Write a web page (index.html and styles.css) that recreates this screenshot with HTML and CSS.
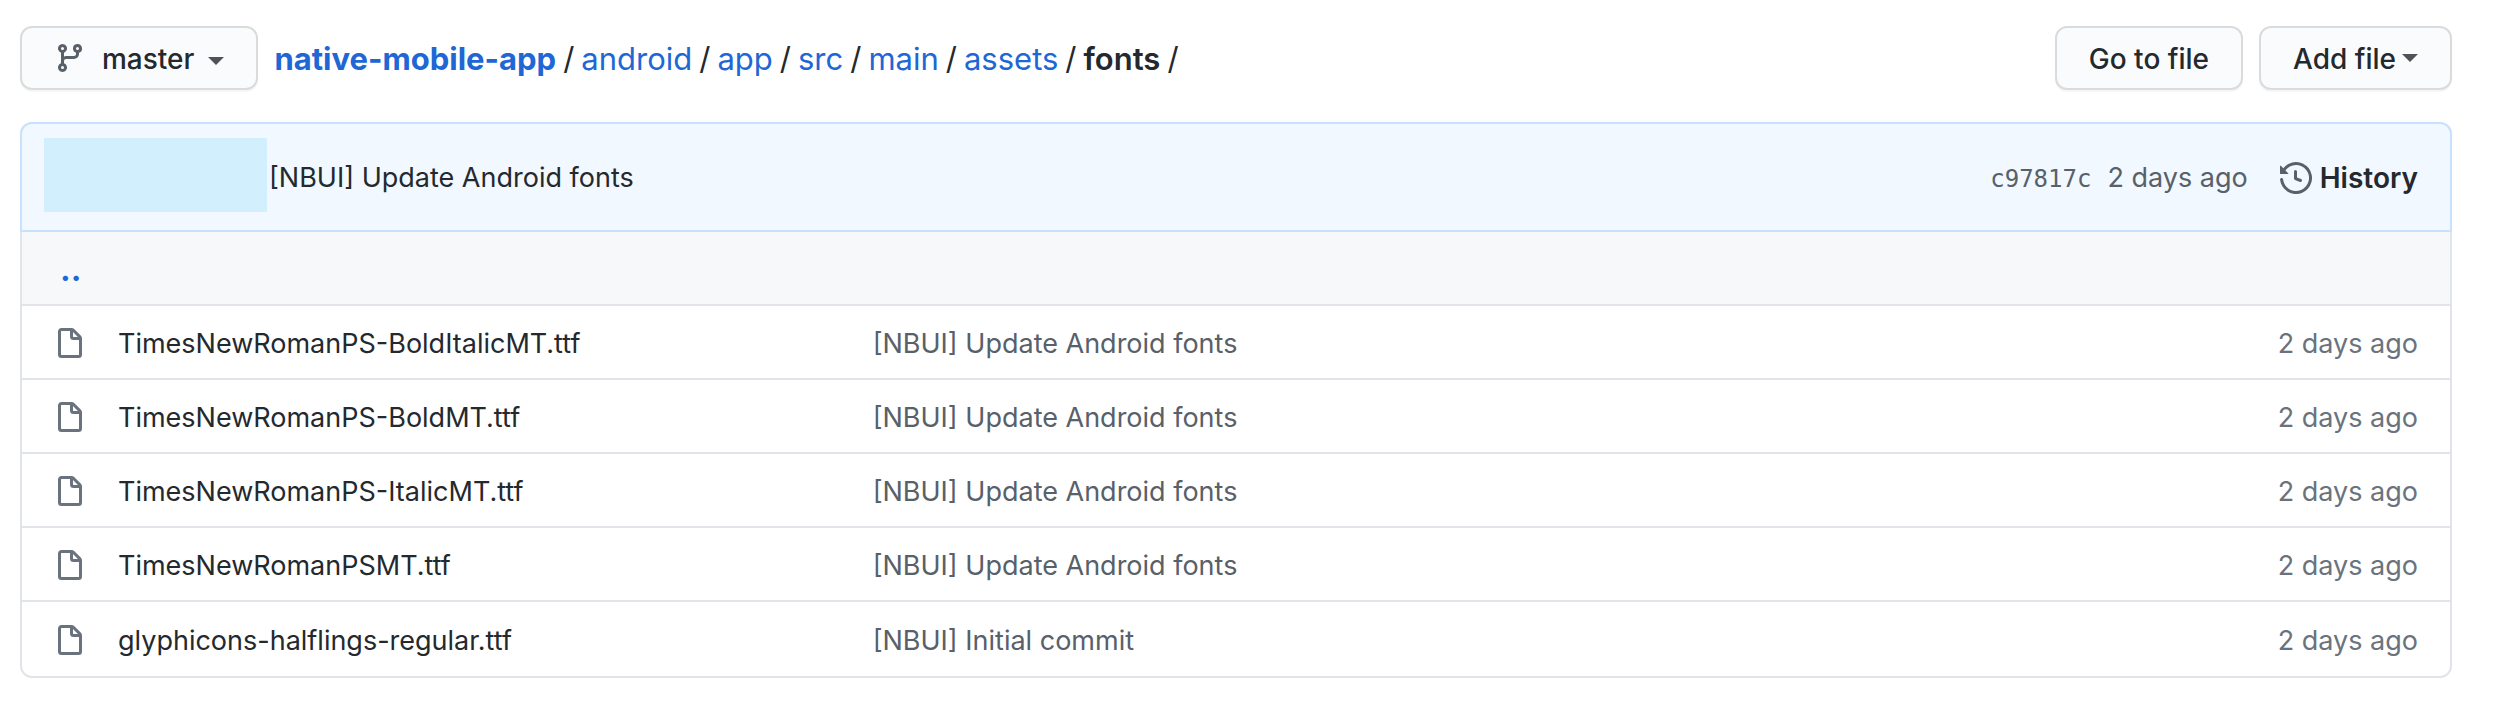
FILE: index.html
```
<!DOCTYPE html>
<html lang="en">
<head>
<meta charset="utf-8">
<title>native-mobile-app/android/app/src/main/assets/fonts</title>
<link rel="stylesheet" href="styles.css">
</head>
<body>
<svg class="sprite" aria-hidden="true">
  <symbol id="file" viewBox="0 0 16 16"><path fill-rule="evenodd" d="M3.75 1.5a.25.25 0 00-.25.25v11.5c0 .138.112.25.25.25h8.5a.25.25 0 00.25-.25V6H9.75A1.75 1.75 0 018 4.25V1.5H3.75zm5.75.56v2.19c0 .138.112.25.25.25h2.19L9.5 2.06zM2 1.75C2 .784 2.784 0 3.75 0h5.086c.464 0 .909.184 1.237.513l3.414 3.414c.329.328.513.773.513 1.237v8.086A1.75 1.75 0 0112.25 15h-8.5A1.75 1.75 0 012 13.25V1.75z"/></symbol>
</svg>
<main class="page">
  <div class="toolbar">
    <button class="btn" type="button">
      <svg class="icon branch-icon" viewBox="0 0 16 16" aria-hidden="true"><path fill-rule="evenodd" d="M11.75 2.5a.75.75 0 100 1.5.75.75 0 000-1.5zm-2.25.75a2.25 2.25 0 113 2.122V6A2.5 2.5 0 0110 8.5H6a1 1 0 00-1 1v1.128a2.251 2.251 0 11-1.5 0V5.372a2.25 2.25 0 111.5 0v1.836A2.492 2.492 0 016 7h4a1 1 0 001-1v-.628A2.25 2.25 0 019.5 3.25zM4.25 12a.75.75 0 100 1.5.75.75 0 000-1.5zM3.5 3.25a.75.75 0 111.5 0 .75.75 0 01-1.5 0z"/></svg>
      <span class="label">master</span>
      <span class="caret branch-caret"></span>
    </button>
    <nav class="breadcrumb" aria-label="Path">
      <a class="root" href="#">native-mobile-app</a><span class="sep">/</span><a href="#">android</a><span class="sep">/</span><a href="#">app</a><span class="sep">/</span><a href="#">src</a><span class="sep">/</span><a href="#">main</a><span class="sep">/</span><a href="#">assets</a><span class="sep">/</span><strong>fonts</strong><span class="sep">/</span>
    </nav>
    <div class="actions">
      <button class="btn" type="button"><span class="label">Go to file</span></button>
      <button class="btn" type="button"><span class="label">Add file</span><span class="caret add-caret"></span></button>
    </div>
  </div>
  <section class="box">
    <header class="commit">
      <div class="author"></div>
      <a class="message" href="#">[NBUI] Update Android fonts</a>
      <div class="meta">
        <a class="sha" href="#">c97817c</a>
        <span class="date">2 days ago</span>
        <a class="history" href="#"><svg class="icon" viewBox="0 0 16 16" aria-hidden="true"><path fill-rule="evenodd" d="M1.643 3.143L.427 1.927A.25.25 0 000 2.104V5.75c0 .138.112.25.25.25h3.646a.25.25 0 00.177-.427L2.715 4.215a6.5 6.5 0 11-1.18 4.458.75.75 0 10-1.493.154 8.001 8.001 0 101.6-5.684zM7.75 4a.75.75 0 01.75.75v2.992l2.028.812a.75.75 0 01-.557 1.392l-2.5-1A.75.75 0 017 8.25v-3.5A.75.75 0 017.75 4z"/></svg><strong>History</strong></a>
      </div>
    </header>
    <table class="files">
      <colgroup><col class="col-icon"><col class="col-name"><col><col class="col-age"></colgroup>
      <tbody>
        <tr class="parent"><td colspan="4"><a href="#">..</a></td></tr>
        <tr><td class="type"><svg class="icon" aria-hidden="true"><use href="#file"/></svg></td><td><a href="#">TimesNewRomanPS-BoldItalicMT.ttf</a></td><td class="note"><a href="#">[NBUI] Update Android fonts</a></td><td class="age">2 days ago</td></tr>
        <tr><td class="type"><svg class="icon" aria-hidden="true"><use href="#file"/></svg></td><td><a href="#">TimesNewRomanPS-BoldMT.ttf</a></td><td class="note"><a href="#">[NBUI] Update Android fonts</a></td><td class="age">2 days ago</td></tr>
        <tr><td class="type"><svg class="icon" aria-hidden="true"><use href="#file"/></svg></td><td><a href="#">TimesNewRomanPS-ItalicMT.ttf</a></td><td class="note"><a href="#">[NBUI] Update Android fonts</a></td><td class="age">2 days ago</td></tr>
        <tr><td class="type"><svg class="icon" aria-hidden="true"><use href="#file"/></svg></td><td><a href="#">TimesNewRomanPSMT.ttf</a></td><td class="note"><a href="#">[NBUI] Update Android fonts</a></td><td class="age">2 days ago</td></tr>
        <tr><td class="type"><svg class="icon" aria-hidden="true"><use href="#file"/></svg></td><td><a href="#">glyphicons-halflings-regular.ttf</a></td><td class="note"><a href="#">[NBUI] Initial commit</a></td><td class="age">2 days ago</td></tr>
      </tbody>
    </table>
  </section>
</main>
</body>
</html>
```
FILE: styles.css
```
* { box-sizing: border-box; }

body {
  margin: 0;
  background: #fff;
  color: #24292e;
  font-family: Inter, "Liberation Sans", sans-serif;
  font-size: 27px;
  line-height: 40px;
}

a { color: inherit; text-decoration: none; }
strong { font-weight: 600; }

.sprite { display: none; }
.page { padding: 26px 44px 46px 20px; }

.icon {
  display: block;
  flex: none;
  width: 32px;
  height: 32px;
  fill: #586069;
}

.toolbar { display: flex; align-items: center; }

.btn {
  display: flex;
  align-items: center;
  height: 64px;
  padding: 0 32px;
  border: 2px solid #d9dbdd;
  border-radius: 12px;
  background: #fafbfc;
  box-shadow: 0 2px 0 rgba(27, 31, 35, 0.04);
  color: #24292e;
  font: inherit;
  font-size: 28px;
  font-weight: 500;
  white-space: nowrap;
}
.label { padding-top: 2px; }

.branch-icon { margin-right: 16px; }

.caret {
  border: 8px solid transparent;
  border-top-color: #4f5358;
  border-bottom-width: 0;
}
.branch-caret { margin: 6px 0 0 14px; }
.add-caret { margin-left: 6px; }

.breadcrumb {
  display: flex;
  margin-left: 16px;
  padding-top: 2px;
  font-size: 31px;
}
.breadcrumb a { color: #2067d5; }
.breadcrumb .root { font-weight: 700; }
.sep { padding: 0 7px; }

.actions { display: flex; gap: 16px; margin-left: auto; }

.box {
  margin-top: 32px;
  border: 2px solid #e1e4e8;
  border-radius: 12px;
}

.commit {
  display: flex;
  align-items: center;
  height: 110px;
  margin: -2px -2px 0;
  padding: 2px 32px 0 22px;
  border: 2px solid #c8e1ff;
  border-radius: 12px 12px 0 0;
  background: #f1f8ff;
}
.author {
  width: 223px;
  height: 74px;
  margin-bottom: 6px;
  background: #d1effd;
}
.message { margin-left: 2px; }
.meta {
  display: flex;
  align-items: center;
  margin-left: auto;
  color: #586069;
}
.sha { padding-top: 2px; font-family: "DejaVu Sans Mono", monospace; font-size: 24px; }
.date { margin-left: 16px; }
.history {
  display: flex;
  align-items: center;
  gap: 8px;
  margin-left: 32px;
  color: #24292e;
  font-size: 28px;
}

.files {
  width: 100%;
  border-collapse: separate;
  border-spacing: 0;
  table-layout: fixed;
}
.col-icon { width: 96px; }
.col-name { width: 31%; }
.col-age { width: 240px; }
.files td { height: 74px; padding: 4px 0 0; border-bottom: 2px solid #e1e4e8; }
.files tr:last-child td { border-bottom: 0; }
.files .parent td {
  padding-left: 38px;
  background: #f6f8fa;
  color: #2067d5;
  font-size: 32px;
  font-weight: 700;
}
.files .type { padding-left: 32px; }
.type .icon { fill: #6a737d; }
.files .note { padding-left: 2px; color: #586069; }
.files .age { padding-right: 32px; color: #6a737d; text-align: right; }
```
